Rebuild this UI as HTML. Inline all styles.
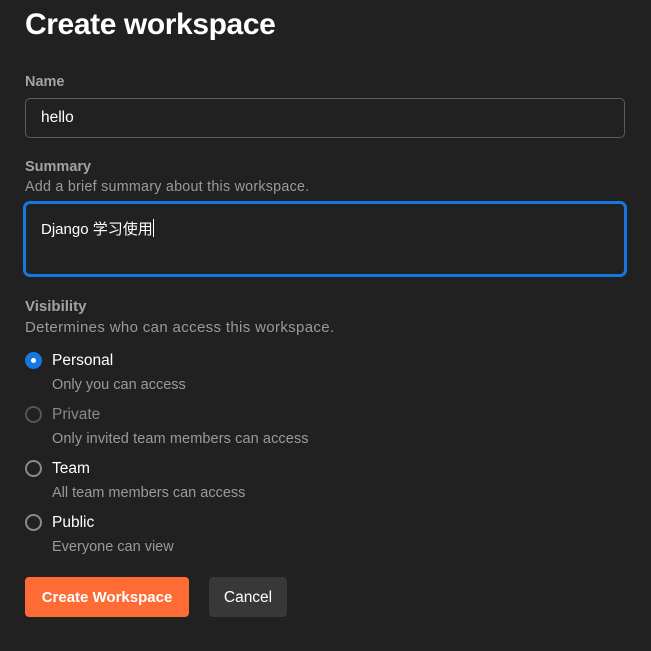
<!DOCTYPE html><html><head><style>
body{margin:0;width:651px;height:651px;background:#212121;font-family:"Liberation Sans","Noto Sans CJK SC",sans-serif;position:relative;overflow:hidden}
.a{position:absolute;white-space:nowrap;line-height:1}
.lbl{font-size:14.5px;font-weight:bold;color:#a3a3a3}
.d{font-size:14.5px;color:#9a9a9a}
.opt{font-size:15.5px;color:#fff}
.r{position:absolute;left:25px;border:2px solid #8a8a8a;border-radius:50%;box-sizing:border-box;width:17px;height:17px}
</style></head><body>
<div class="a" style="left:25px;top:10px;font-size:30px;font-weight:bold;color:#fff;letter-spacing:-0.4px">Create workspace</div>
<div class="a lbl" style="left:25px;top:75px">Name</div>
<div style="position:absolute;left:25px;top:98px;width:600px;height:40px;border:1px solid #5c5c5c;border-radius:5px;box-sizing:border-box"></div>
<div class="a" style="left:41px;top:110px;font-size:15.5px;color:#fff">hello</div>
<div class="a lbl" style="left:25px;top:160px">Summary</div>
<div class="a d" style="left:25px;top:180px;font-size:14.3px;letter-spacing:0.25px">Add a brief summary about this workspace.</div>
<div style="position:absolute;left:23px;top:201px;width:604px;height:76px;border:3px solid #1677e0;border-radius:7px;box-sizing:border-box"></div>
<div class="a" style="left:41px;top:219px;font-size:15px;color:#fff">Django 学习使用<span style="display:inline-block;width:1px;height:18px;background:#fff;vertical-align:-3px"></span></div>
<div class="a lbl" style="left:25px;top:299px;font-size:15px">Visibility</div>
<div class="a d" style="left:25px;top:320px;font-size:15px;letter-spacing:0.35px">Determines who can access this workspace.</div>
<div class="r" style="top:352px;border:none;background:#1677e0"><div style="position:absolute;left:6px;top:6px;width:5px;height:5px;border-radius:50%;background:#fff"></div></div>
<div class="a opt" style="left:52px;top:353px">Personal</div>
<div class="a d" style="left:52px;top:378px">Only you can access</div>
<div class="r" style="top:406px;border-color:#555"></div>
<div class="a opt" style="left:52px;top:407px;color:#8a8a8a">Private</div>
<div class="a d" style="left:52px;top:432px;letter-spacing:0.1px">Only invited team members can access</div>
<div class="r" style="top:460px"></div>
<div class="a opt" style="left:52px;top:461px">Team</div>
<div class="a d" style="left:52px;top:486px">All team members can access</div>
<div class="r" style="top:514px"></div>
<div class="a opt" style="left:52px;top:515px">Public</div>
<div class="a d" style="left:52px;top:540px">Everyone can view</div>
<div style="position:absolute;left:25px;top:577px;width:164px;height:40px;background:#ff6b35;border-radius:4px;color:#fff;font-weight:bold;font-size:15px;line-height:42px;text-align:center">Create Workspace</div>
<div style="position:absolute;left:209px;top:577px;width:78px;height:40px;background:#383838;border-radius:4px;color:#fff;font-size:15.5px;line-height:42px;text-align:center">Cancel</div>
</body></html>
